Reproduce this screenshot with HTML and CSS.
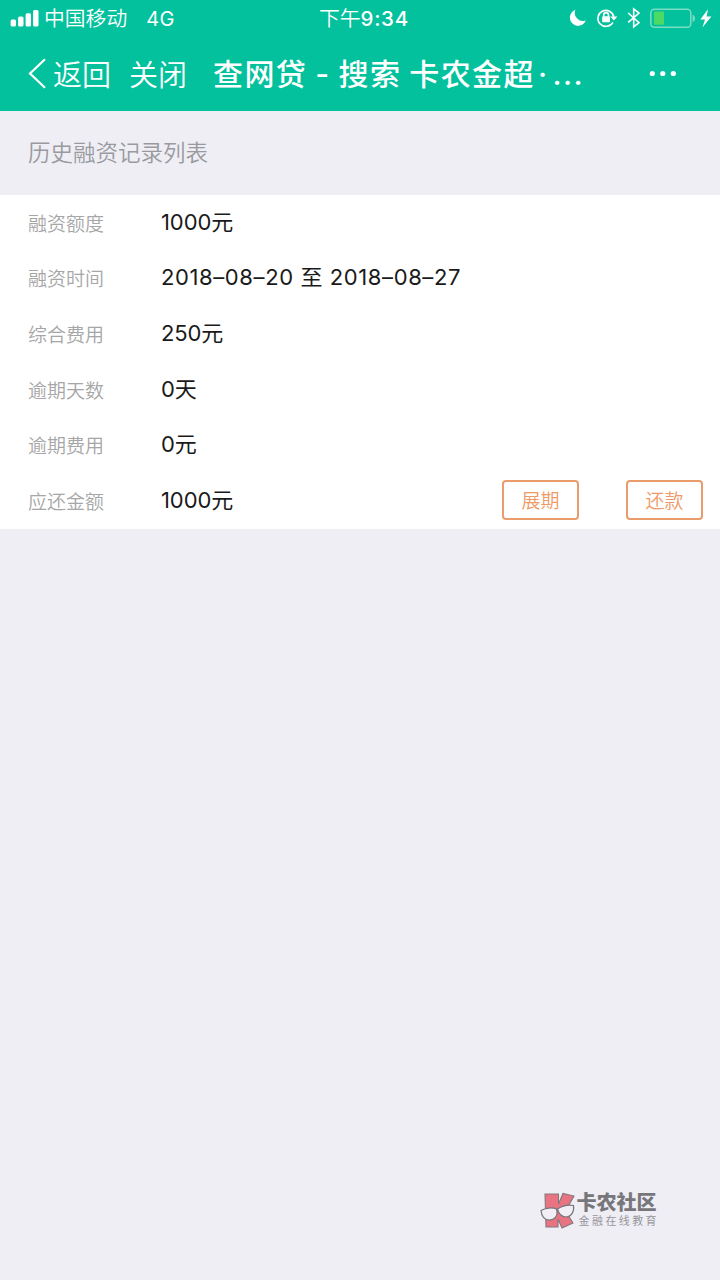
FILE: index.html
```html
<!DOCTYPE html>
<html lang="zh-CN">
<head>
    <meta charset="UTF-8">
    <meta name="viewport" content="width=device-width, initial-scale=1.0">
    <title>查网贷 - 搜索 卡农金超</title>
    <link rel="stylesheet" href="styles.css">
</head>
<body>
    <div class="page">
        <div class="header">
            <!-- 状态栏 -->
            <div class="status">
                <div class="status-left">
                    <svg class="signal" width="29" height="18" viewBox="0 0 29 18" fill="#fff">
                        <rect x="0.6" y="9.4" width="5.4" height="7" rx="1.5"/>
                        <rect x="8.1" y="6.4" width="5.4" height="10" rx="1.5"/>
                        <rect x="15.6" y="3.2" width="5.4" height="13.2" rx="1.5"/>
                        <rect x="23.1" y="0" width="5.4" height="16.4" rx="1.5"/>
                    </svg>
                    <span class="carrier">中国移动</span>
                    <span class="network">4G</span>
                </div>
                <div class="clock">下午<b>9:34</b></div>
                <svg class="status-icons" width="152" height="26" viewBox="0 0 152 26">
                    <path d="M7.5 3.8A8.2 8.2 0 1 0 17.8 14.4A8 8 0 0 1 7.5 3.8Z" fill="#fff"/>
                    <g fill="none" stroke="#fff" stroke-width="1.6">
                        <path d="M44.9 16.3A8 8 0 1 1 45.8 11"/>
                        <path d="M35.7 10.8V9A2.4 2.4 0 0 1 40.5 9V10.8"/>
                        <path d="M60.2 7L71 16.6L65.7 20.8V2.8L71 7L60.2 16.4"/>
                    </g>
                    <rect x="34.2" y="10.3" width="7.8" height="6" rx="1" fill="#fff"/>
                    <path d="M42.2 10.4H49.4L45.9 14.6Z" fill="#fff"/>
                    <rect x="82.8" y="3.2" width="40" height="18" rx="3.5" fill="none" stroke="#7bdcc4" stroke-width="1.5"/>
                    <rect x="86" y="5.5" width="10" height="13.2" rx="1" fill="#4cd964"/>
                    <path d="M124.6 8.7C127.8 9.4 127.8 15.2 124.6 15.9Z" fill="#7bdcc4"/>
                    <path d="M140 3.2L132.3 13.6H137L134.4 21.6L143.4 10.6H138.6Z" fill="#fff"/>
                </svg>
            </div>
            <!-- 导航栏 -->
            <div class="nav">
                <svg class="back" width="19" height="32" viewBox="0 0 19 32">
                    <path d="M18 1.2L3 15.5L18 29.8" fill="none" stroke="#fff" stroke-width="2.2"/>
                </svg>
                <span class="nav-link">返回</span>
                <span class="nav-link close">关闭</span>
                <div class="title">查网贷 - 搜索 卡农金超<span class="dot">·</span><span class="ellipsis">...</span></div>
                <svg class="more" width="28" height="8" viewBox="0 0 28 8" fill="#fff">
                    <circle cx="3.3" cy="3.5" r="2.6"/>
                    <circle cx="13.8" cy="3.5" r="2.6"/>
                    <circle cx="24.3" cy="3.5" r="2.6"/>
                </svg>
            </div>
        </div>

        <div class="list-title">历史融资记录列表</div>

        <!-- 融资记录 -->
        <div class="record">
            <div class="row"><span class="label">融资额度</span><span class="value">1000元</span></div>
            <div class="row"><span class="label">融资时间</span><span class="value date">2018–08–20 至 2018–08–27</span></div>
            <div class="row"><span class="label">综合费用</span><span class="value">250元</span></div>
            <div class="row"><span class="label">逾期天数</span><span class="value">0天</span></div>
            <div class="row"><span class="label">逾期费用</span><span class="value">0元</span></div>
            <div class="row">
                <span class="label">应还金额</span><span class="value">1000元</span>
                <div class="actions">
                    <button>展期</button>
                    <button>还款</button>
                </div>
            </div>
        </div>

        <div class="brand">
            <svg width="36" height="38" viewBox="0 0 36 38">
                <g fill="#e77480" stroke="#85777d" stroke-width="1.1">
                    <path d="M5 2H18.5V12L23 1.5L34 4L25.5 19L33 31L22 36L18 27V35H6Z"/>
                </g>
                <g fill="#f1eff5" stroke="#77757b" stroke-width="1.2">
                    <path d="M1 18.5C5 16 12 15 16.5 17C18.5 24 14.5 28 9.5 28C4 28 1.5 23.5 1 18.5Z"/>
                    <path d="M17.5 17C22 14 28 12.5 33.5 13.5C34.5 20 31 25 26 25C21.5 25 18.5 21 17.5 17Z"/>
                </g>
            </svg>
            <div class="brand-text">
                <div class="brand-name">卡农社区</div>
                <div class="brand-sub">金融在线教育</div>
            </div>
        </div>
    </div>
</body>
</html>
```
FILE: styles.css
```css
body {
    margin: 0;
    background-color: #efeef5;
    font-family: Inter, "Noto Sans CJK SC", sans-serif;
    color: #1a1a1a;
}
.page {
    display: flex;
    flex-direction: column;
    height: 1280px;
    overflow: hidden;
}
.header {
    height: 111px;
    background-color: #03c19d;
    color: #fff;
}
.status {
    display: grid;
    grid-template-columns: 319px 1fr 152px;
    align-items: center;
    height: 36px;
    font-size: 20.8px;
    line-height: 38px;
    white-space: nowrap;
}
.status-left {
    display: flex;
    align-items: center;
    padding-left: 10px;
}
.signal {
    margin-right: 5px;
}
.carrier,
.clock {
    font-weight: 350;
}
.network {
    margin-left: 19px;
    font-size: 20px;
    letter-spacing: 0.3px;
}
.clock b {
    font-weight: 500;
    font-size: 20.5px;
    letter-spacing: 0.7px;
}
.nav {
    display: flex;
    align-items: center;
    height: 75px;
    padding: 0 43px 0 27px;
    line-height: 75px;
    white-space: nowrap;
}
.back {
    margin-right: 7px;
}
.nav-link {
    padding-top: 4px;
    font-size: 29px;
    font-weight: 350;
}
.close {
    margin-left: 18px;
}
.title {
    padding-top: 1px;
    margin-left: 26px;
    font-size: 30px;
    font-weight: 500;
    letter-spacing: 1.4px;
    word-spacing: -1.4px;
}
.dot {
    margin-left: 3px;
}
.ellipsis {
    margin-left: 4px;
}
.more {
    margin-left: auto;
}
.list-title {
    height: 84px;
    padding-left: 28px;
    font-size: 22.5px;
    font-weight: 350;
    line-height: 83px;
    color: #999a9e;
}
.record {
    display: grid;
    grid-template-rows: repeat(6, 1fr);
    height: 334px;
    background-color: #fff;
}
.row {
    display: flex;
    align-items: center;
    padding: 0 17px 3px 28px;
}
.label {
    width: 133px;
    padding-top: 2px;
    font-size: 19px;
    font-weight: 350;
    color: #a6a6a6;
}
.value {
    padding-bottom: 3px;
    font-size: 22px;
    font-weight: 370;
    letter-spacing: -0.1px;
}
.date {
    letter-spacing: 0.6px;
}
.actions {
    display: flex;
    gap: 47px;
    padding-top: 1px;
    margin-left: auto;
}
.actions button {
    width: 77px;
    height: 40px;
    padding: 0 0 2px;
    border: 2px solid #eb9c6c;
    border-radius: 4px;
    background: none;
    font-family: inherit;
    font-size: 19px;
    font-weight: 350;
    color: #ee9a68;
}
.brand {
    display: flex;
    align-items: center;
    gap: 1px;
    margin: auto 61px 50px auto;
}
.brand-name {
    font-size: 20px;
    font-weight: 900;
    line-height: 20px;
    color: #77767b;
}
.brand-sub {
    padding-left: 2px;
    font-size: 11px;
    letter-spacing: 2.4px;
    line-height: 16px;
    color: #97969c;
}
```
